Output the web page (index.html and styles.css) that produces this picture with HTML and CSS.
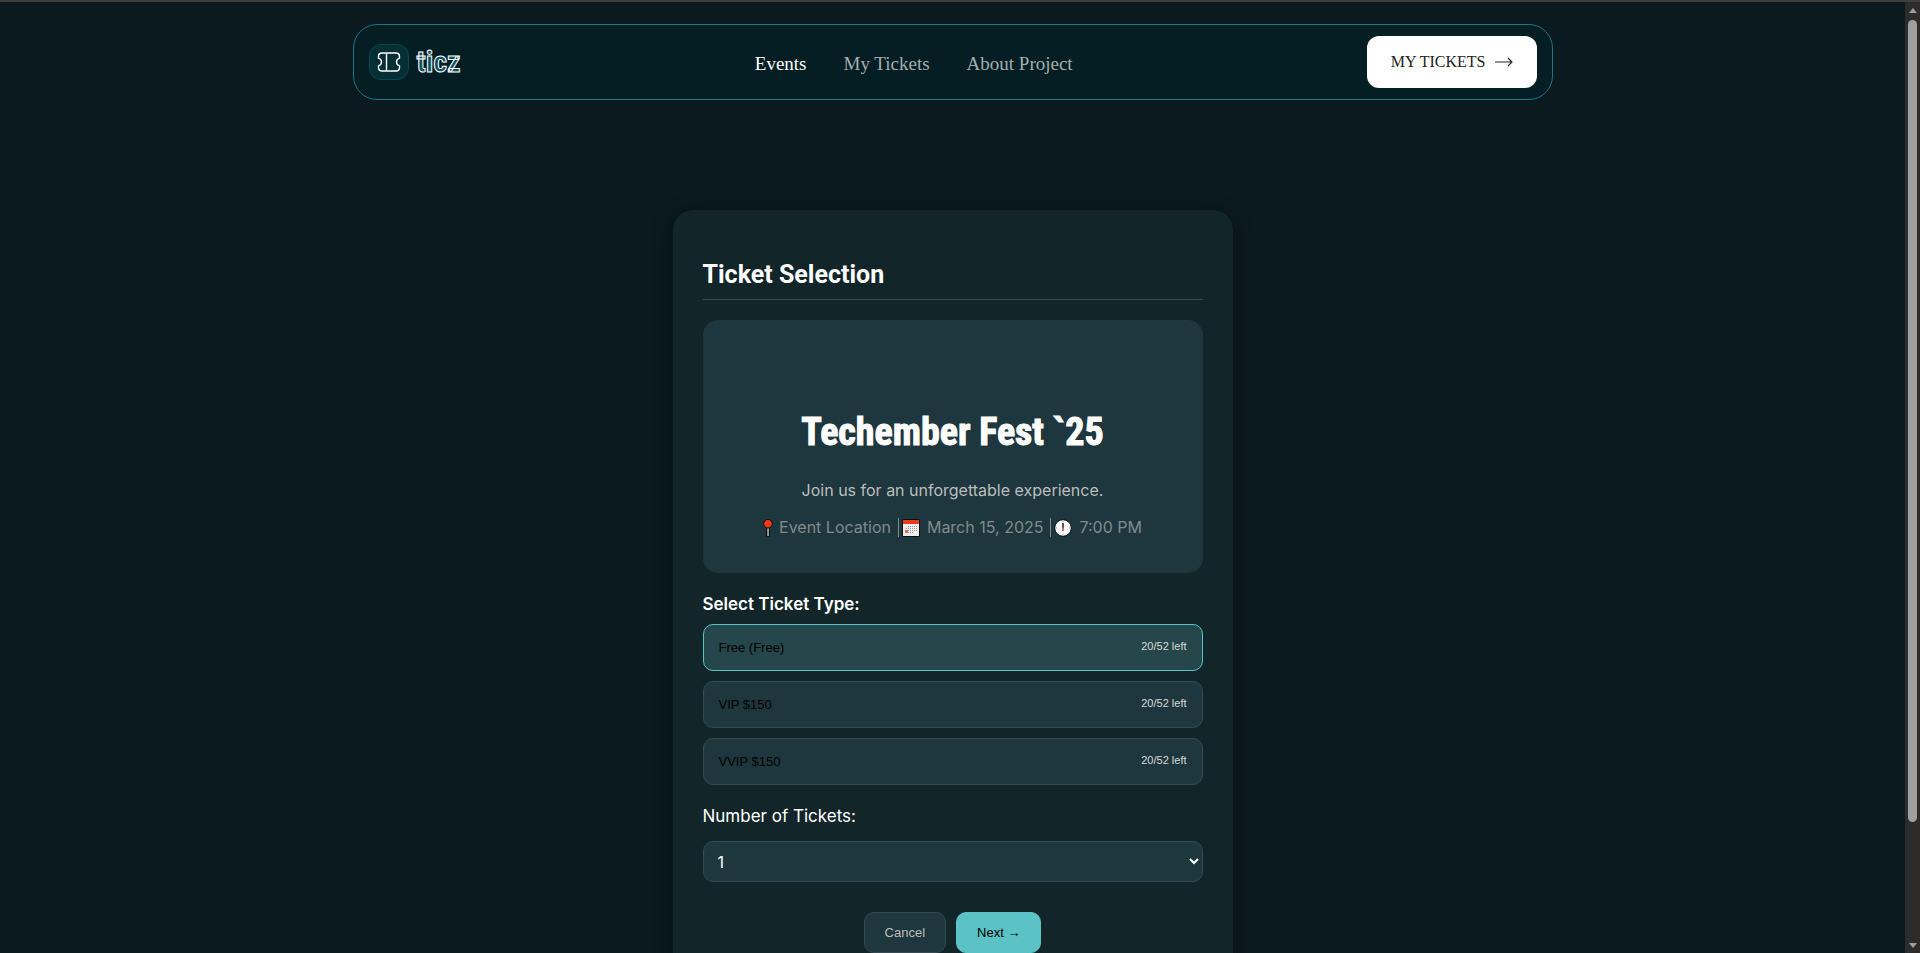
FILE: index.html
```html
<!DOCTYPE html>
<html lang="en">
<head>
<meta charset="utf-8">
<meta name="viewport" content="width=device-width, initial-scale=1">
<title>Ticz</title>
<link rel="stylesheet" href="styles.css">
</head>
<body>
<div class="page">
  <header class="navbar">
    <a class="brand" href="#">
      <span class="brand-badge">
        <svg width="24" height="20" viewBox="0 0 24 20" fill="none" stroke="#fff" stroke-width="1.4" stroke-linejoin="round"><path d="M5 1h14c2.200 0 3.500 1.300 3.500 3.500v1.700c-2 .6-3 2-3 3.800s1 3.200 3 3.800v1.700c0 2.200-1.300 3.500-3.500 3.500H5c-2.200 0-3.500-1.300-3.500-3.500v-1.700c2-.6 3-2 3-3.800s-1-3.200-3-3.800V4.500C1.500 2.300 2.800 1 5 1z"/><path d="M9.500 1v18"/></svg>
      </span>
      <span class="brand-name">ticz</span>
    </a>
    <nav class="nav-links">
      <a class="nav-link active" href="#">Events</a>
      <a class="nav-link" href="#">My Tickets</a>
      <a class="nav-link" href="#">About Project</a>
    </nav>
    <button class="nav-button" type="button">MY TICKETS
      <svg width="18" height="10" viewBox="0 0 18 10" fill="none" stroke="#222" stroke-width="1.100"><path d="M0 5h17M13 1l4 4-4 4"/></svg>
    </button>
  </header>

  <main class="card">
    <h1 class="card-title">Ticket Selection</h1>
    <section class="event">
      <h2 class="event-name">Techember Fest `25</h2>
      <p class="event-text">Join us for an unforgettable experience.</p>
      <p class="event-meta">
        <svg class="pin" width="10" height="18" viewBox="0 0 10 18"><path d="M3 8h4v9.500H3z" fill="#0b0f10"/><path d="M4.400 8h1.300v9H4.400z" fill="#d8d8d8"/><circle cx="5" cy="4.700" r="4.300" fill="#f03a17" stroke="#0b0f10"/></svg>
        <span>Event Location</span>
        <span class="bar"></span>
        <svg class="calendar" width="18" height="18" viewBox="0 0 18 18"><path d="M.5.5h17v17H.5z" fill="#eee" stroke="#0b0f10"/><path d="M1 1h16v4H1z" fill="#f03a17"/><path d="M6 7.500h9M4 9.500h11M4 11.500h11M4 13.500h8" stroke="#999" stroke-dasharray="1 1"/><path d="M3 11h3v3H3z" fill="#f26b50"/></svg>
        <span>March 15, 2025</span>
        <span class="bar"></span>
        <svg class="clock" width="18" height="18" viewBox="0 0 18 18"><circle cx="9" cy="9" r="8.300" fill="#fff" stroke="#0b0f10"/><path d="M9 4v5" stroke="#222" stroke-width="1.500"/><path d="M9 8v4" stroke="#e03030" stroke-width="1.500"/><path d="M9 2v1M9 15v1M2 9h1M15 9h1" stroke="#888"/></svg>
        <span>7:00 PM</span>
      </p>
    </section>

    <h3 class="section-title">Select Ticket Type:</h3>
    <div class="tickets">
      <button class="ticket selected" type="button"><span>Free (Free)</span><span class="left">20/52 left</span></button>
      <button class="ticket" type="button"><span>VIP $150</span><span class="left">20/52 left</span></button>
      <button class="ticket" type="button"><span>VVIP $150</span><span class="left">20/52 left</span></button>
    </div>

    <label class="count-label" for="count">Number of Tickets:</label>
    <select class="count" id="count">
      <option>1</option>
      <option>2</option>
      <option>3</option>
    </select>

    <div class="actions">
      <button class="action cancel" type="button">Cancel</button>
      <button class="action next" type="button">Next →</button>
    </div>
  </main>
</div>
<div class="scrollbar" aria-hidden="true">
  <span class="arrow up"></span>
  <span class="track"><span class="thumb"></span></span>
  <span class="arrow down"></span>
</div>
</body>
</html>
```
FILE: styles.css
```css
* {
  box-sizing: border-box;
}

body {
  margin: 0;
  height: 100vh;
  display: flex;
  overflow: hidden;
  border-top: 2px solid #3f3f3f;
  background: #0b1a1f;
  color: #fff;
  font-family: Inter, "Liberation Sans", sans-serif;
  font-size: 16px;
}

.page {
  flex: 1;
  min-width: 0;
  padding-top: 22px;
  overflow: hidden;
}

.navbar {
  display: flex;
  justify-content: space-between;
  align-items: center;
  max-width: 1200px;
  margin: 0 auto;
  padding: 11px 15px;
  background: #041e23;
  border: 1px solid #197686;
  border-radius: 24px;
  font-family: "Liberation Serif", serif;
}

.brand {
  display: flex;
  align-items: center;
  gap: 8px;
  color: #fff;
  text-decoration: none;
}

.brand-badge {
  display: grid;
  place-items: center;
  width: 40px;
  height: 36px;
  background: #052f35;
  border: 1px solid #0e464f;
  border-radius: 12px;
}

.brand-name {
  color: #0e5260;
  font: 700 30px/36px "Roboto Condensed", Roboto, sans-serif;
  -webkit-text-stroke: 1px #fff;
}

.nav-links {
  display: flex;
  gap: 37px;
  padding-top: 3px;
}

.nav-link {
  color: #a5adaf;
  font-size: 19px;
  line-height: 24px;
  text-decoration: none;
}

.nav-link.active {
  color: #fff;
}

.nav-button {
  display: flex;
  align-items: center;
  gap: 9px;
  height: 52px;
  padding: 0 24px;
  border: 0;
  border-radius: 12px;
  background: #fff;
  color: #222;
  font: 16px "Liberation Serif", serif;
}

.card {
  width: 100%;
  max-width: 560px;
  margin: 110px auto 60px;
  padding: 50px 30px 30px;
  background: #122529;
  border-radius: 20px;
  box-shadow: 0 4px 20px rgba(0, 0, 0, 0.4);
}

.card-title {
  margin: 0 0 20px;
  padding-bottom: 9px;
  border-bottom: 1px solid #3a4c50;
  font: 700 25px/30px Roboto, sans-serif;
}

.event {
  padding: 86px 20px 33px;
  background: #1e373e;
  border-radius: 15px;
  text-align: center;
}

.event-name {
  margin: 0;
  font: 700 38px/52px "Roboto Condensed", Roboto, sans-serif;
  -webkit-text-stroke: 1px #fff;
}

.event-text {
  margin: 20px 0 0;
  color: #bdbdbd;
  line-height: 24px;
}

.event-meta {
  display: flex;
  justify-content: center;
  align-items: center;
  margin: 13px 0 0;
  color: #828a8c;
  line-height: 25px;
}

.pin {
  margin-right: 6px;
}

.bar {
  width: 1px;
  height: 19px;
  margin: 0 3px 0 7px;
  background: #828a8c;
}

.calendar,
.clock {
  margin-right: 7px;
}

.section-title {
  margin: 20px 0 9px;
  font-size: 17px;
  font-weight: 600;
  line-height: 22px;
}

.tickets {
  display: grid;
  gap: 10px;
}

.ticket {
  display: flex;
  justify-content: space-between;
  align-items: center;
  height: 47px;
  padding: 0 15px;
  background: #1e373e;
  border: 1px solid #344b51;
  border-radius: 10px;
  color: #000;
  font: 13px "Liberation Sans", sans-serif;
}

.ticket.selected {
  background: #25464b;
  border-color: #55c4c6;
}

.left {
  padding-bottom: 3px;
  color: #d8d8d8;
  font-size: 11px;
}

.count-label {
  display: block;
  margin: 20px 0 14px;
  font-size: 17px;
  line-height: 22px;
}

.count {
  display: block;
  width: 100%;
  height: 41px;
  padding: 0 10px;
  background: #1e373e;
  border: 1px solid #344b51;
  border-radius: 10px;
  color: #fff;
  font: 16px Inter, sans-serif;
}

.actions {
  display: flex;
  justify-content: center;
  gap: 10px;
  margin-top: 30px;
}

.action {
  height: 41px;
  padding: 0 20px;
  border: 1px solid #344b51;
  border-radius: 10px;
  font: 13px "Liberation Sans", sans-serif;
}

.cancel {
  background: #1e373e;
  color: #bdbdbd;
}

.next {
  background: #5bc2c5;
  border-color: #5bc2c5;
  color: #000;
}

.scrollbar {
  display: flex;
  flex-direction: column;
  align-items: center;
  width: 15px;
  padding: 6px 0 5px;
  background: #2c2c2c;
}

.arrow {
  border: 4px solid transparent;
}

.up {
  border-top: 0;
  border-bottom: 5px solid #9f9f9f;
}

.down {
  border-bottom: 0;
  border-top: 5px solid #9f9f9f;
}

.track {
  flex: 1;
  width: 9px;
  padding: 7px 0;
}

.thumb {
  display: block;
  height: 87.5%;
  border-radius: 5px;
  background: #9f9f9f;
}
```
